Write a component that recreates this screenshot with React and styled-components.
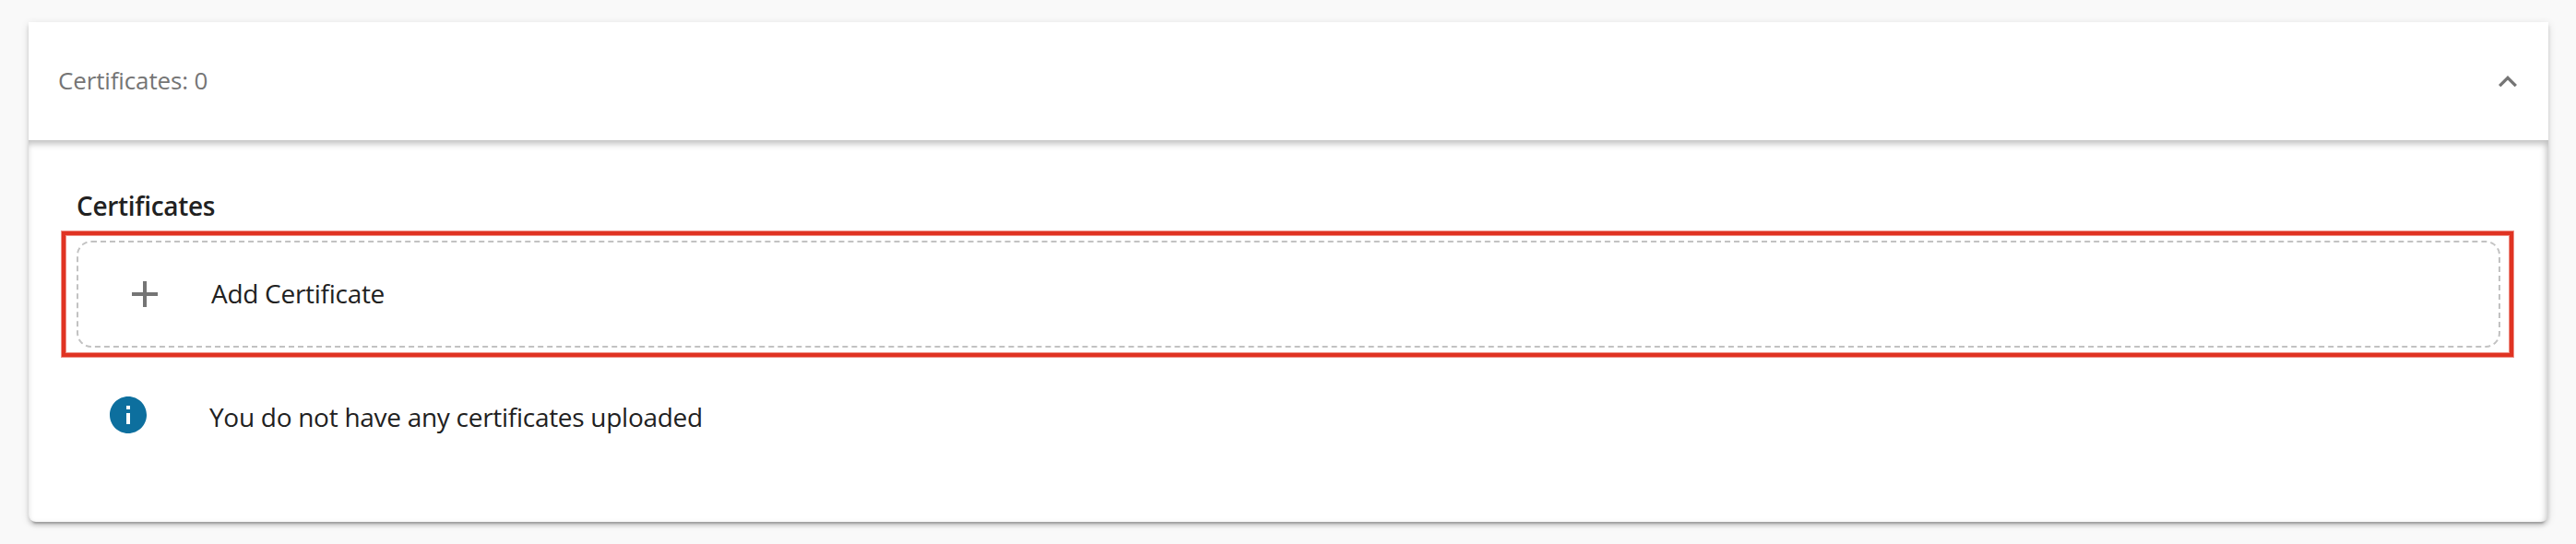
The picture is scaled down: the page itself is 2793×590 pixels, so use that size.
import React from "react";
import styled, { createGlobalStyle } from "styled-components";

const GlobalStyle = createGlobalStyle`
  *, *::before, *::after { box-sizing: border-box; }
  body {
    margin: 0;
    background: #f9f9f9;
    color: #212121;
    font-family: "Open Sans", "Noto Sans", sans-serif;
  }
`;

const Page = styled.main`
  height: 590px;
  padding: 24px 30px 0 31px;
  overflow: hidden;
`;

const Panel = styled.section`
  display: flex;
  flex-direction: column;
  height: 542px;
  background: #fff;
  border-radius: 0 0 8px 8px;
  box-shadow: 0 6px 2px -4px rgba(0, 0, 0, 0.2), 0 4px 4px 0 rgba(0, 0, 0, 0.14),
    0 2px 10px 0 rgba(0, 0, 0, 0.12);
`;

const PanelHeader = styled.header`
  display: flex;
  align-items: center;
  justify-content: space-between;
  flex: none;
  height: 128px;
  padding: 0 34px 0 32px;
  color: #757575;
  font-size: 26px;
  line-height: 40px;
`;

const PanelBody = styled.div`
  flex: 1;
  padding: 51px 37px 0 35px;
  border-radius: 0 0 8px 8px;
  box-shadow: inset -2px 4px 7px rgba(0, 0, 0, 0.25);
`;

const SectionTitle = styled.h2`
  margin: 0 0 8px 17px;
  font-size: 28px;
  font-weight: 600;
  line-height: 40px;
  letter-spacing: -0.3px;
`;

const Highlight = styled.div`
  height: 136px;
  margin: 0 1px;
  padding: 6px 10px 6px 12px;
  border: 4px solid #e03322;
  box-shadow: 0 0 0 1px #ee8f86, inset 0 0 0 1px #ee8f86;
`;

const AddButton = styled.button`
  display: flex;
  align-items: center;
  gap: 48px;
  width: 100%;
  height: 116px;
  padding: 0 48px;
  border: 2px dashed #c2c2c2;
  border-radius: 16px;
  background: transparent;
  color: inherit;
  font: inherit;
  font-size: 28px;
  line-height: 40px;
  text-align: left;
`;

const InfoRow = styled.div`
  display: flex;
  align-items: center;
  gap: 64px;
  margin: 39px 0 0 49px;
  font-size: 28px;
  line-height: 40px;
`;

const Icon = styled.svg`
  display: block;
  flex: none;
  width: 48px;
  height: 48px;
  fill: ${({ $color }) => $color};
`;

const Chevron = styled.svg`
  display: block;
  width: 20px;
  height: 12.35px;
  fill: #757575;
`;

const Label = styled.span`
  padding-top: ${({ $drop = "0" }) => $drop};
  padding-bottom: ${({ $lift = "0" }) => $lift};
  letter-spacing: ${({ $spacing = "-0.28px" }) => $spacing};
`;

export default function App() {
  return (
    <>
      <GlobalStyle />
      <Page>
        <Panel>
          <PanelHeader>
            <Label $spacing="-0.14px" $lift="2px">
              Certificates: 0
            </Label>
            <Chevron viewBox="6 8 12 7.41" aria-hidden="true">
              <path d="M12 8l-6 6 1.41 1.41L12 10.83l4.59 4.58L18 14z" />
            </Chevron>
          </PanelHeader>
          <PanelBody>
            <SectionTitle>Certificates</SectionTitle>
            <Highlight>
              <AddButton type="button">
                <Icon $color="#757575" viewBox="0 0 24 24" aria-hidden="true">
                  <path d="M19 13h-6v6h-2v-6H5v-2h6V5h2v6h6v2z" />
                </Icon>
                <Label $lift="2px">Add Certificate</Label>
              </AddButton>
            </Highlight>
            <InfoRow>
              <Icon $color="#0d6f9e" viewBox="0 0 24 24" aria-hidden="true">
                <path d="M12 2C6.48 2 2 6.48 2 12s4.48 10 10 10 10-4.48 10-10S17.52 2 12 2zm1 15h-2v-6h2v6zm0-8h-2V7h2v2z" />
              </Icon>
              <Label $drop="4px">You do not have any certificates uploaded</Label>
            </InfoRow>
          </PanelBody>
        </Panel>
      </Page>
    </>
  );
}
